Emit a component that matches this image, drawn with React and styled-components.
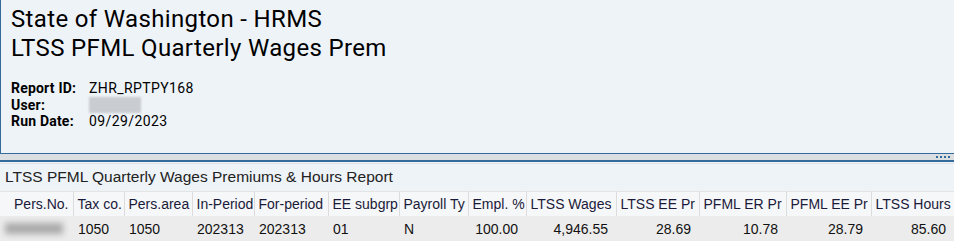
import styled, { createGlobalStyle } from 'styled-components'

const GlobalStyle = createGlobalStyle`
  html, body {
    margin: 0;
    padding: 0;
    background: #eef3f8;
  }
  body {
    width: 954px;
    height: 241px;
    overflow: hidden;
  }
`

const columns = [
  { label: 'Pers.No.', width: 73, headAlign: 'right' },
  { label: 'Tax co.', width: 51 },
  { label: 'Pers.area', width: 68 },
  { label: 'In-Period', width: 62 },
  { label: 'For-period', width: 74 },
  { label: 'EE subgrp', width: 71 },
  { label: 'Payroll Ty', width: 69 },
  { label: 'Empl. %', width: 58, align: 'right' },
  { label: 'LTSS Wages', width: 90, align: 'right' },
  { label: 'LTSS EE Pr', width: 83, align: 'right' },
  { label: 'PFML ER Pr', width: 87, align: 'right' },
  { label: 'PFML EE Pr', width: 85, align: 'right' },
  { label: 'LTSS Hours', width: 83, align: 'right' },
]

const row = [null, '1050', '1050', '202313', '202313', '01', 'N', '100.00', '4,946.55', '28.69', '10.78', '28.79', '85.60']

export default function App() {
  return (
    <>
      <GlobalStyle />
      <Page>
        <HeaderPanel>
          <Title>State of Washington - HRMS</Title>
          <Title>LTSS PFML Quarterly Wages Prem</Title>
          <Meta>
            <Label>Report ID:</Label>
            <Value>ZHR_RPTPY168</Value>
            <Label>User:</Label>
            <Value>
              <Blur $w={52} />
            </Value>
            <Label>Run Date:</Label>
            <Value>09/29/2023</Value>
          </Meta>
        </HeaderPanel>
        <Splitter>
          <Grip>
            <i />
            <i />
            <i />
            <i />
          </Grip>
        </Splitter>
        <ReportPanel>
          <ReportTitle>LTSS PFML Quarterly Wages Premiums &amp; Hours Report</ReportTitle>
          <Table>
            <colgroup>
              {columns.map((c) => (
                <col key={c.label} style={{ width: c.width }} />
              ))}
            </colgroup>
            <thead>
              <tr>
                {columns.map((c) => (
                  <Th key={c.label} $align={c.headAlign}>
                    {c.label}
                  </Th>
                ))}
              </tr>
            </thead>
            <tbody>
              <tr>
                {row.map((v, i) => (
                  <Td key={i} $align={columns[i].align}>
                    {v === null ? <Blur $w={58} $h={11} $soft /> : v}
                  </Td>
                ))}
              </tr>
            </tbody>
          </Table>
        </ReportPanel>
      </Page>
    </>
  )
}

const Page = styled.div`
  display: flex;
  flex-direction: column;
  width: 954px;
  height: 241px;
`
const HeaderPanel = styled.div`
  height: 154px;
  box-sizing: border-box;
  padding: 5px 10px 0;
  border-left: 1px solid #346a9c;
  border-bottom: 1px solid #346a9c;
  background: #eef3f8;
  font-family: Roboto, 'Segoe UI', sans-serif;
  color: #000;
`
const Title = styled.div`
  font-size: 24px;
  line-height: 29px;
  letter-spacing: 0.35px;
`
const Meta = styled.div`
  display: grid;
  grid-template-columns: 78px auto;
  margin-top: 17px;
  font-size: 14px;
  line-height: 16.5px;
`
const Label = styled.span`
  font-weight: 700;
  letter-spacing: 0.2px;
`
const Value = styled.span`
  display: flex;
  align-items: center;
  letter-spacing: 0.4px;
`
const Blur = styled.span`
  display: inline-block;
  width: ${(p) => p.$w}px;
  height: ${(p) => p.$h || 16}px;
  background: ${(p) => (p.$soft ? '#a9a9a9' : '#c9ccd0')};
  filter: blur(${(p) => (p.$soft ? 3 : 1)}px);
`
const Splitter = styled.div`
  display: flex;
  justify-content: flex-end;
  align-items: center;
  height: 6px;
  background: #dcdfe2;
  border-bottom: 2px solid #346a9c;
  padding-right: 4px;
`
const Grip = styled.div`
  display: flex;
  gap: 2px;

  i {
    width: 2px;
    height: 2px;
    background: #346a9c;
  }
`
const ReportPanel = styled.div`
  flex: 1;
  margin-top: 1px;
  border-top: 1px solid #dfe3e7;
  background: #eef3f8;
  font-family: 'Liberation Sans', Arial, sans-serif;
`
const ReportTitle = styled.div`
  height: 27px;
  padding-left: 5px;
  font-size: 15.5px;
  line-height: 26px;
  color: #222;
`
const Table = styled.table`
  table-layout: fixed;
  width: 954px;
  border-collapse: collapse;
  font-size: 14px;
`
const Th = styled.th`
  height: 24px;
  padding: 0 2px 0 4px;
  text-align: ${(p) => p.$align || 'left'};
  font-weight: 400;
  white-space: nowrap;
  overflow: hidden;
  color: #1a1a3a;
  background: #f6f7f8;
  border-right: 1px solid #dcdcdc;
  border-top: 1px solid #e4e4e4;
  padding-right: ${(p) => (p.$align === 'right' ? 4 : 2)}px;
`
const Td = styled.td`
  height: 25px;
  padding: 0 8px 0 5px;
  text-align: ${(p) => p.$align || 'left'};
  white-space: nowrap;
  color: #111;
  background: #ececec;
`
